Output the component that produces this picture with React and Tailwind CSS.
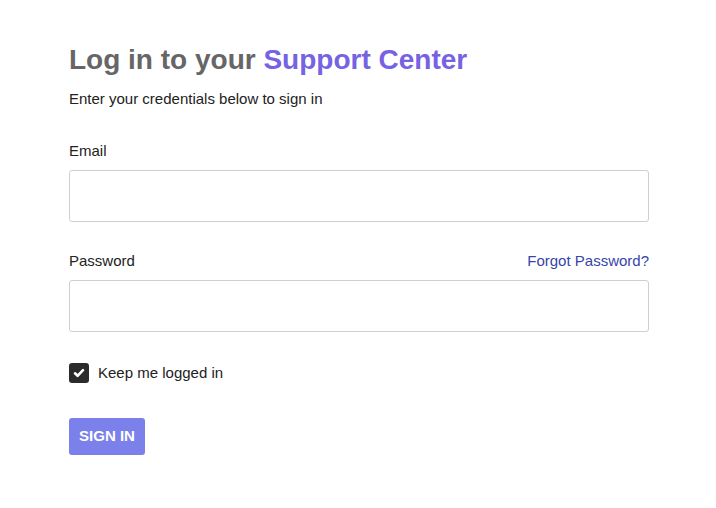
const App = () => {
  return (
    <div className="min-h-[508px] w-full bg-white font-['Liberation_Sans',Arial,sans-serif] text-[#222]">
      <div className="mx-[69px] pt-[42px] w-[580px]">
        <h1 className="text-[28px] font-bold leading-[36px] text-[#666]">
          Log in to your <span className="text-[#7663e2]">Support Center</span>
        </h1>
        <p className="mt-[11px] text-[15px] leading-[20px] text-[#222]">
          Enter your credentials below to sign in
        </p>

        <form className="mt-[32px]" onSubmit={(e) => e.preventDefault()}>
          <label className="block text-[15px] leading-[20px]">Email</label>
          <input
            type="email"
            className="mt-[9px] block h-[52px] w-full rounded-[3px] border border-[#cfcfcf] px-3 outline-none"
          />

          <div className="mt-[29px] flex items-center justify-between">
            <label className="text-[15px] leading-[20px]">Password</label>
            <a href="#" className="text-[15px] leading-[20px] text-[#3545aa]">
              Forgot Password?
            </a>
          </div>
          <input
            type="password"
            className="mt-[9px] block h-[52px] w-full rounded-[3px] border border-[#cfcfcf] px-3 outline-none"
          />

          <label className="mt-[31px] flex items-center gap-[9px] text-[15px] leading-[20px]">
            <span className="flex h-[20px] w-[20px] items-center justify-center rounded-[3px] bg-[#2b2b2b]">
              <svg width="12" height="12" viewBox="0 0 12 12">
                <path d="M2 6.3 L4.6 8.8 L10 3.2" fill="none" stroke="white" strokeWidth="2.6" strokeLinecap="round" strokeLinejoin="round" />
              </svg>
            </span>
            Keep me logged in
          </label>

          <button
            type="submit"
            className="mt-[35px] h-[37px] w-[76px] rounded-[3px] bg-[#7b80ea] text-[15px] font-bold text-white"
          >
            SIGN IN
          </button>
        </form>
      </div>
    </div>
  )
}

export default App
